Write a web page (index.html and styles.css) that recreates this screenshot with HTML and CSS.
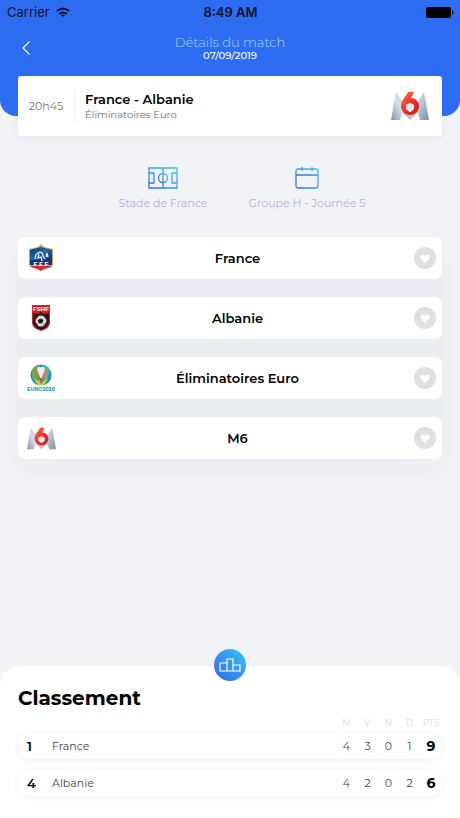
FILE: index.html
```html
<!DOCTYPE html>
<html lang="fr">
<head>
<meta charset="utf-8">
<meta name="viewport" content="width=device-width, initial-scale=1">
<title>Détails du match</title>
<link rel="stylesheet" href="styles.css">
</head>
<body>
<svg class="defs" aria-hidden="true">
  <defs>
    <linearGradient id="line" x1="0" y1="1" x2="1" y2="0"><stop offset="0" stop-color="#326ce9"/><stop offset="1" stop-color="#3dc9f4"/></linearGradient>
    <linearGradient id="silver" x1="0" y1="0" x2="1" y2="1"><stop offset="0" stop-color="#e9eef5"/><stop offset=".5" stop-color="#b3bfd1"/><stop offset="1" stop-color="#7e8da7"/></linearGradient>
    <linearGradient id="silver-left" x1="1" y1="0" x2="0" y2="1"><stop offset="0" stop-color="#c9d3e2"/><stop offset=".5" stop-color="#d5dce8"/><stop offset="1" stop-color="#8190aa"/></linearGradient>
    <linearGradient id="red" x1="0" y1="0" x2="1" y2="1"><stop offset="0" stop-color="#ff7759"/><stop offset=".5" stop-color="#e93525"/><stop offset="1" stop-color="#c5171b"/></linearGradient>
    <linearGradient id="navy" x1="0" y1="0" x2="1" y2="1"><stop offset="0" stop-color="#123768"/><stop offset=".5" stop-color="#1768ae"/><stop offset="1" stop-color="#102d66"/></linearGradient>
    <symbol id="m6" viewBox="0 0 38 30">
      <path d="M5 1 15 16l-1 5-3 1-2 7H0z" fill="url(#silver-left)"/>
      <path d="M33 1 23 16l1 5 3 1 2 7h9z" fill="url(#silver)"/>
      <path d="m11 21 8 8 8-8z" fill="#c0b9d0"/>
      <path d="M17 1h6l-3 6c5 0 8 4 8 8 0 5-4 9-9 9s-9-4-9-9c0-6 4-8 7-14zm2 11-4 2v4l4 3 4-3v-4z" fill="url(#red)" fill-rule="evenodd"/>
      <path d="m19 12 4 2v4l-4 3-4-3v-4z" fill="#e7e4ed"/>
    </symbol>
    <symbol id="heart" viewBox="0 0 22 22">
      <circle cx="11" cy="11" r="11" fill="#dfdfdf"/>
      <path d="M11 16 7 12c-2-3 1-6 4-3 3-3 6 0 4 3z" fill="#fff"/>
    </symbol>
  </defs>
</svg>

<header class="top">
  <div class="status">
    <span class="carrier">Carrier
      <svg width="14" height="11" viewBox="0 0 14 11" fill="none" stroke="#071026" stroke-width="2"><path d="M1 4q6-5 12 0M3 7q4-3 8 0"/><path d="m5 8 2 2 2-2q-2-1-4 0z" fill="#071026" stroke="none"/></svg>
    </span>
    <span class="clock">8:49 AM</span>
    <svg class="battery" width="28" height="11" viewBox="0 0 28 11"><rect width="25" height="11" rx="2"/><path d="M26 3q3 2 0 5z"/></svg>
  </div>
  <div class="nav">
    <button class="back" type="button" aria-label="Retour"><svg width="8" height="14" viewBox="0 0 8 14" fill="none" stroke="#fff" stroke-width="1.2"><path d="M7.500.5 1 7l6.500 6.500"/></svg></button>
    <div class="heading">
      <h1>Détails du match</h1>
      <p>07/09/2019</p>
    </div>
  </div>
</header>

<main class="content">
  <section class="match">
    <time class="hour">20h45</time>
    <div class="teams">
      <h2>France - Albanie</h2>
      <p>Éliminatoires Euro</p>
    </div>
    <svg width="38" height="30" role="img" aria-label="M6"><use href="#m6"/></svg>
  </section>

  <section class="infos">
    <div class="info">
      <svg width="30" height="22" viewBox="0 0 30 22" fill="none" stroke="url(#line)" stroke-width="1.300"><path d="M1 1h28v20H1zM15 1v20M1 6h5v10H1M29 6h-5v10h5"/><circle cx="15" cy="11" r="4.500"/></svg>
      <p>Stade de France</p>
    </div>
    <div class="info">
      <svg width="24" height="22" viewBox="0 0 24 22" fill="none" stroke="url(#line)" stroke-width="1.300"><rect x="1" y="2" width="22" height="19" rx="2"/><path d="M1 8h22M7 0v4M17 0v4"/></svg>
      <p>Groupe H - Journée 5</p>
    </div>
  </section>

  <ul class="follow">
    <li>
      <svg class="crest" width="28" height="28" viewBox="0 0 28 28"><path d="M14 0 17 3l9 2v16c-4 4-8 3-12 6-4-3-8-2-12-6V5l9-2z" fill="#c9a553"/><path d="M14 3 25 6v10H3V6z" fill="url(#navy)"/><path d="M3 16h22v5H3z" fill="#17377b"/><path d="M3 22h22c-4 3-8 2-11 5-3-3-7-2-11-5z" fill="#d82a35"/><path d="M8 15c1-3 0-5 3-6 3-2 5 0 5 3l2 3M12 10l-1 4 3-1 1 4M19 13l1-4 1 4" fill="none" stroke="#e9f1f8" stroke-width="1.300"/><path d="m16 6 2 1-1 2" fill="#e5393e"/><text class="crest-text" x="14" y="22" text-anchor="middle">F F F</text></svg>
      <span>France</span>
      <button type="button" aria-label="Ajouter France aux favoris"><svg width="22" height="22"><use href="#heart"/></svg></button>
    </li>
    <li>
      <svg class="crest" width="28" height="28" viewBox="0 0 28 28"><path d="M5 1h18v18q0 5-9 8-9-3-9-8z" fill="#cf1f2f"/><path d="M6 9l5 1 3-2 3 2 5-1v9q0 5-8 8-8-3-8-8z" fill="#371216"/><text class="crest-text" x="14" y="7" text-anchor="middle">FSHF</text><circle cx="14" cy="17" r="5.500" fill="#dddcda"/><path d="m14 15 2 1-1 3h-3l-1-3zM9 15l2-2M17 12l2 3M9 19l2 2M19 19l-3 2" fill="#211b1c" stroke="#211b1c" stroke-width=".7"/></svg>
      <span>Albanie</span>
      <button type="button" aria-label="Ajouter Albanie aux favoris"><svg width="22" height="22"><use href="#heart"/></svg></button>
    </li>
    <li>
      <svg class="crest" width="28" height="28" viewBox="0 0 28 28"><circle cx="14" cy="11" r="10.500" fill="#218ba5"/><path d="M5 6q4-5 8-5v10l-4 8-4-5z" fill="#61ad60"/><path d="M15 1q7 1 8 6l-3 9-4 3z" fill="#58b4b4"/><path d="M8 6q3 2 3 8l2 5M20 6q-3 2-3 8l-2 5" fill="none" stroke="#e8693a" stroke-width="2"/><path d="M11 3h6q2 3-1 7l-1 4h-2l-1-4q-3-4-1-7z" fill="#e4edf0"/><path d="m7 15 5 2 2 3 3-3 4-2-4 6h-6z" fill="#b8d44b"/><path d="M10 21h8l-2 2h-4z" fill="#d3edf0"/><text class="euro-text" x="14" y="27" text-anchor="middle">EURO2020</text></svg>
      <span>Éliminatoires Euro</span>
      <button type="button" aria-label="Ajouter Éliminatoires Euro aux favoris"><svg width="22" height="22"><use href="#heart"/></svg></button>
    </li>
    <li>
      <svg class="crest" width="29" height="23"><use href="#m6"/></svg>
      <span>M6</span>
      <button type="button" aria-label="Ajouter M6 aux favoris"><svg width="22" height="22"><use href="#heart"/></svg></button>
    </li>
  </ul>
</main>

<section class="sheet">
  <button class="podium" type="button" aria-label="Classement"><svg width="22" height="14" viewBox="0 0 22 14" fill="none" stroke="#fff" stroke-width="1.200"><path d="M1 5h7v8H1zM8 1h6v12H8zM14 7h7v6h-7z"/></svg></button>
  <h2>Classement</h2>
  <table>
    <thead>
      <tr><th></th><th></th><th>M</th><th>V</th><th>N</th><th>D</th><th>PTS</th></tr>
    </thead>
    <tbody>
      <tr><td class="rank">1</td><td class="team">France</td><td>4</td><td>3</td><td>0</td><td>1</td><td class="points">9</td></tr>
      <tr><td class="rank">4</td><td class="team">Albanie</td><td>4</td><td>2</td><td>0</td><td>2</td><td class="points">6</td></tr>
    </tbody>
  </table>
</section>
</body>
</html>
```
FILE: styles.css
```css
* {
  box-sizing: border-box;
}

body {
  margin: 0;
  min-height: 100vh;
  display: flex;
  flex-direction: column;
  background: #f1f3f7;
  color: #000;
  font-family: Montserrat, Inter, sans-serif;
}

h1, h2, p, ul {
  margin: 0;
  padding: 0;
}

button {
  display: grid;
  place-items: center;
  padding: 0;
  border: 0;
  background: none;
}

svg {
  display: block;
}

.defs {
  position: absolute;
  width: 0;
  height: 0;
}

.top {
  padding-bottom: 40px;
  background: #2e6df2;
  border-radius: 0 0 16px 16px;
}

.status {
  display: grid;
  grid-template-columns: 1fr auto 1fr;
  align-items: center;
  height: 24px;
  padding: 0 6px 0 7px;
  color: #071026;
  font-family: Inter, sans-serif;
  font-size: 13px;
}

.carrier {
  display: flex;
  align-items: center;
  gap: 6px;
}

.clock {
  font-weight: 600;
}

.battery {
  justify-self: end;
}

.nav {
  display: grid;
  grid-template-columns: 52px 1fr 52px;
  height: 52px;
  padding-bottom: 4px;
  align-items: center;
}

.back {
  height: 40px;
}

.heading {
  text-align: center;
}

.heading h1 {
  color: #a9d2ff;
  font-size: 13px;
  font-weight: 300;
  line-height: 16px;
}

.heading p {
  color: #fff;
  font-size: 10px;
  font-weight: 500;
  line-height: 12px;
}

.content {
  padding: 0 18px;
}

.match {
  display: grid;
  grid-template-columns: 57px 1fr auto;
  align-items: center;
  height: 60px;
  margin-top: -40px;
  padding-right: 13px;
  background: #fff;
  border-radius: 3px;
  box-shadow: 0 2px 8px rgba(40, 60, 100, 0.06);
}

.hour {
  border-right: 1px solid #f0f0f2;
  color: #707070;
  font-size: 11px;
  line-height: 36px;
  text-align: center;
}

.teams {
  padding-left: 10px;
}

.teams h2 {
  font-size: 13px;
  font-weight: 600;
  line-height: 18px;
}

.teams p {
  color: #6c6c6c;
  font-size: 10px;
  line-height: 14px;
}

.infos {
  display: grid;
  grid-template-columns: 144px 144px;
  justify-content: center;
  padding: 31px 0 26px 10px;
}

.info {
  display: grid;
  justify-items: center;
  gap: 6px;
  color: #a9b3e2;
  font-size: 11px;
  line-height: 16px;
  white-space: nowrap;
}

.follow {
  display: grid;
  gap: 18px;
  border-radius: 7px;
  list-style: none;
  box-shadow: 0 12px 32px rgba(40, 50, 70, 0.04);
  background: rgba(40, 50, 70, 0.03);
}

.follow li {
  display: grid;
  grid-template-columns: 46px 1fr 34px;
  align-items: center;
  justify-items: center;
  height: 42px;
  background: #fff;
  border-radius: 7px;
  font-size: 13px;
  font-weight: 600;
}

.follow span {
  padding-left: 3px;
}

.crest-text {
  fill: #fff;
  font-size: 6px;
  font-weight: 700;
}

.euro-text {
  fill: #1691ad;
  font-size: 5px;
  font-weight: 700;
}

.sheet {
  margin-top: auto;
  padding: 0 18px 22px;
  background: #fff;
  border-radius: 20px 20px 0 0;
}

.podium {
  width: 32px;
  height: 32px;
  margin: -17px auto 3px;
  border-radius: 50%;
  background: linear-gradient(45deg, #3565f2, #37c7ef);
}

.sheet h2 {
  font-size: 20px;
  font-weight: 700;
  line-height: 28px;
}

table {
  display: block;
  margin-top: 5px;
}

thead, tbody {
  display: grid;
  gap: 11px;
}

tr {
  display: grid;
  grid-template-columns: 34px 1fr repeat(4, 21px) 22px;
  align-items: center;
}

th, td {
  padding: 0;
  text-align: center;
}

th {
  color: #d9d9dc;
  font-size: 9px;
  font-weight: 400;
  line-height: 12px;
}

tbody {
  margin-top: 4px;
}

tbody tr {
  height: 26px;
  border-radius: 13px;
  background: #fff;
  box-shadow: 0 1px 8px rgba(0, 0, 0, 0.06);
}

td {
  color: #444;
  font-size: 11px;
}

.rank {
  padding-left: 9px;
  color: #000;
  font-size: 13px;
  font-weight: 600;
  text-align: left;
}

.team {
  text-align: left;
}

.points {
  color: #000;
  font-size: 14px;
  font-weight: 700;
}
```
